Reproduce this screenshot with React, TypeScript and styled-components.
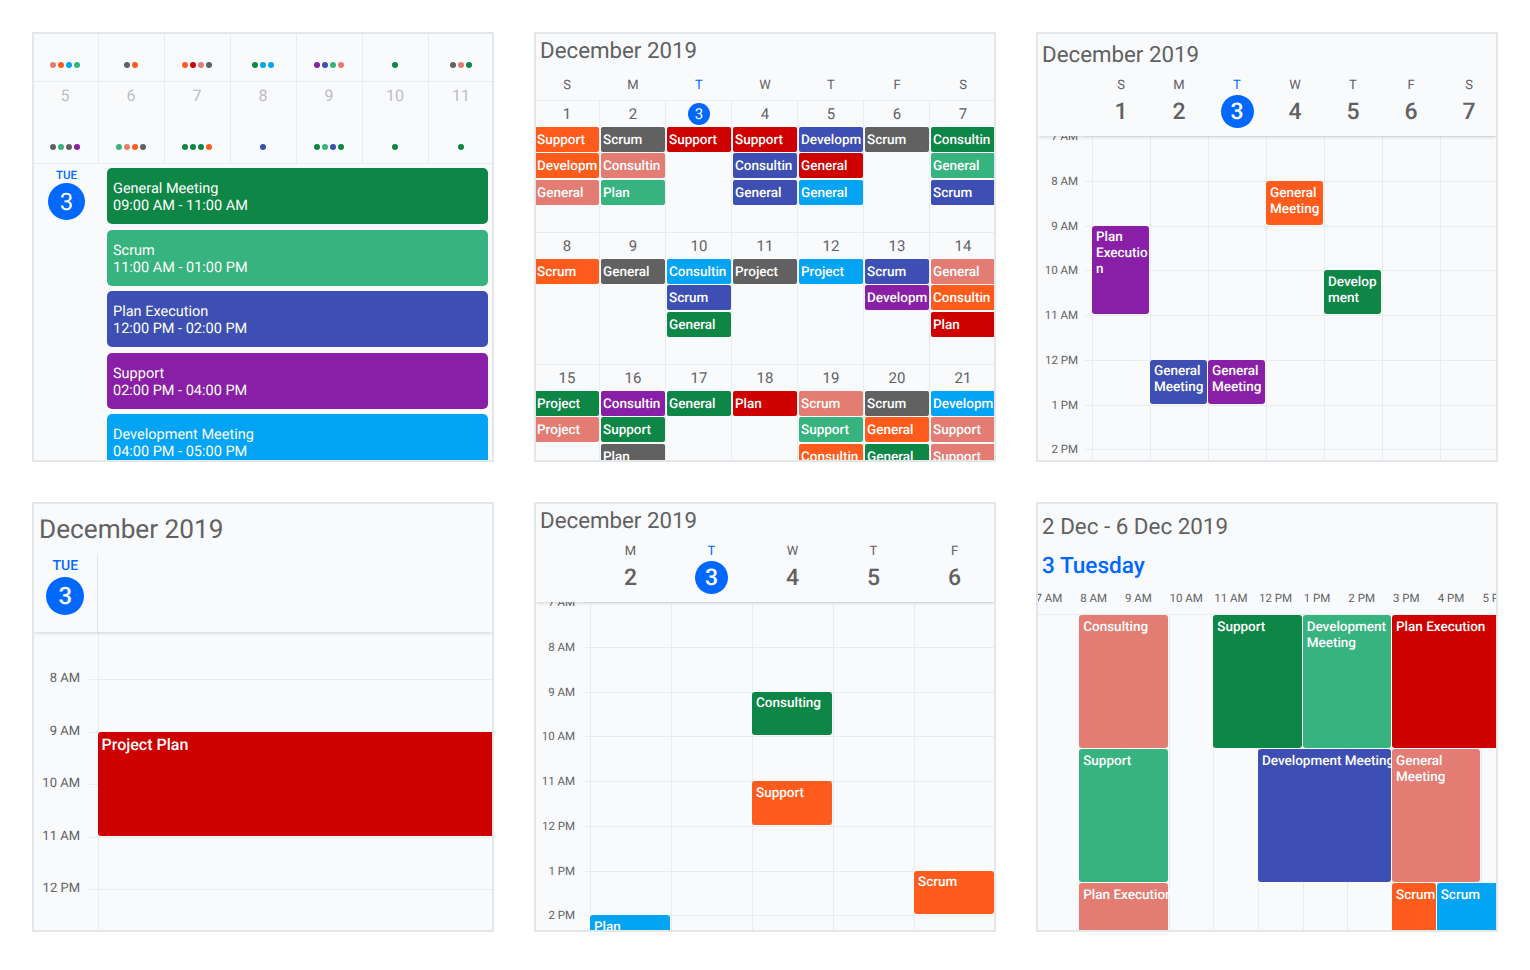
import styled, {createGlobalStyle} from 'styled-components';

const colors = {
    green: '#0e8645',
    mint: '#36b37e',
    indigo: '#3d4fb3',
    purple: '#881fa6',
    sky: '#02a4f3',
    red: '#ce0000',
    salmon: '#e37c72',
    orange: '#fe5b1c',
    grey: '#616161',
};

type Color = keyof typeof colors;
type Item = [string, Color];

const TODAY = '#0067ff';
const TEXT = '#616161';
const LINE = '#ebecf0';

const dotRows: {day?: number, dots: Color[]}[][] = [
    [
        {dots: ['salmon', 'orange', 'sky', 'mint']},
        {dots: ['grey', 'orange']},
        {dots: ['orange', 'red', 'salmon', 'grey']},
        {dots: ['green', 'sky', 'sky']},
        {dots: ['purple', 'indigo', 'mint', 'salmon']},
        {dots: ['green']},
        {dots: ['grey', 'salmon', 'green']},
    ],
    [
        {day: 5, dots: ['grey', 'mint', 'grey', 'purple']},
        {day: 6, dots: ['mint', 'salmon', 'orange', 'grey']},
        {day: 7, dots: ['green', 'green', 'green', 'orange']},
        {day: 8, dots: ['indigo']},
        {day: 9, dots: ['green', 'mint', 'indigo', 'green']},
        {day: 10, dots: ['green']},
        {day: 11, dots: ['green']},
    ],
];

const agenda: [string, string, Color][] = [
    ['General Meeting', '09:00 AM - 11:00 AM', 'green'],
    ['Scrum', '11:00 AM - 01:00 PM', 'mint'],
    ['Plan Execution', '12:00 PM - 02:00 PM', 'indigo'],
    ['Support', '02:00 PM - 04:00 PM', 'purple'],
    ['Development Meeting', '04:00 PM - 05:00 PM', 'sky'],
];

const monthDays: Item[][] = [
    [['Support', 'orange'], ['Development', 'orange'], ['General', 'salmon']],
    [['Scrum', 'grey'], ['Consulting', 'salmon'], ['Plan', 'mint']],
    [['Support', 'red']],
    [['Support', 'red'], ['Consulting', 'indigo'], ['General', 'indigo']],
    [['Development', 'indigo'], ['General', 'red'], ['General', 'sky']],
    [['Scrum', 'grey']],
    [['Consulting', 'green'], ['General', 'mint'], ['Scrum', 'indigo']],
    [['Scrum', 'orange']],
    [['General', 'grey']],
    [['Consulting', 'sky'], ['Scrum', 'indigo'], ['General', 'green']],
    [['Project', 'grey']],
    [['Project', 'sky']],
    [['Scrum', 'indigo'], ['Development', 'purple']],
    [['General', 'salmon'], ['Consulting', 'orange'], ['Plan', 'red']],
    [['Project', 'green'], ['Project', 'salmon']],
    [['Consulting', 'purple'], ['Support', 'green'], ['Plan', 'grey']],
    [['General', 'green']],
    [['Plan', 'red']],
    [['Scrum', 'salmon'], ['Support', 'mint'], ['Consulting', 'orange']],
    [['Scrum', 'grey'], ['General', 'orange'], ['General', 'green']],
    [['Development', 'sky'], ['Support', 'salmon'], ['Support', 'salmon']],
];

const letters = ['S', 'M', 'T', 'W', 'T', 'F', 'S'];
const hourNames = ['7 AM', '8 AM', '9 AM', '10 AM', '11 AM', '12 PM', '1 PM', '2 PM', '3 PM', '4 PM', '5 PM', '6 PM'];

type GridEvent = {title: string, color: Color, col: number, row: number, span: number};

const weekEvents: GridEvent[] = [
    {title: 'General Meeting', color: 'orange', col: 4, row: 2, span: 1},
    {title: 'Plan Execution', color: 'purple', col: 1, row: 3, span: 2},
    {title: 'Development', color: 'green', col: 5, row: 4, span: 1},
    {title: 'General Meeting', color: 'indigo', col: 2, row: 6, span: 1},
    {title: 'General Meeting', color: 'purple', col: 3, row: 6, span: 1},
];

const workWeekEvents: GridEvent[] = [
    {title: 'Consulting', color: 'green', col: 3, row: 3, span: 1},
    {title: 'Support', color: 'orange', col: 3, row: 5, span: 1},
    {title: 'Scrum', color: 'orange', col: 5, row: 7, span: 1},
    {title: 'Plan', color: 'sky', col: 1, row: 8, span: 1},
];

const timelineEvents: {title: string, color: Color, col: number, row: number, width: number, nowrap?: boolean}[] = [
    {title: 'Consulting', color: 'salmon', col: 2, row: 1, width: 2},
    {title: 'Support', color: 'green', col: 5, row: 1, width: 2},
    {title: 'Development Meeting', color: 'mint', col: 7, row: 1, width: 2},
    {title: 'Plan Execution', color: 'red', col: 9, row: 1, width: 3},
    {title: 'Support', color: 'mint', col: 2, row: 2, width: 2},
    {title: 'Development Meeting', color: 'indigo', col: 6, row: 2, width: 3, nowrap: true},
    {title: 'General Meeting', color: 'salmon', col: 9, row: 2, width: 2},
    {title: 'Plan Execution', color: 'salmon', col: 2, row: 3, width: 2, nowrap: true},
    {title: 'Scrum', color: 'orange', col: 9, row: 3, width: 1},
    {title: 'Scrum', color: 'sky', col: 10, row: 3, width: 2},
];

type TimeGridProps = {
    columns: string,
    count: number,
    hours: number,
    rowHeight: number,
    shift?: number,
    labelSize: number,
    labelPad: number,
    tick: number,
    events: GridEvent[],
    eventSize?: number,
};

function TimeGrid({columns, count, hours, rowHeight, shift = 0.4, labelSize, labelPad, tick, events, eventSize = 13.5}: TimeGridProps) {
    const rows = hourNames.slice(0, hours);
    return (
        <Scroller>
            <HourGrid $columns={columns} $rowHeight={rowHeight} $shift={shift}>
                {rows.map((name, row) => (
                    <GutterCell key={name} $row={row + 1} $tick={tick}>
                        <HourLabel $size={labelSize} $pad={labelPad}>{name}</HourLabel>
                    </GutterCell>
                ))}
                {rows.map((name, row) =>
                    Array.from({length: count}, (_, col) => (
                        <SlotCell key={`${name}-${col}`} $row={row + 1} $col={col + 2}/>
                    ))
                )}
                {events.map(event => (
                    <SlotEvent
                        key={`${event.title}-${event.col}-${event.row}`}
                        $color={event.color}
                        $col={event.col + 1}
                        $row={event.row}
                        $span={event.span}
                        $size={eventSize}
                    >
                        {event.title}
                    </SlotEvent>
                ))}
            </HourGrid>
        </Scroller>
    );
}

function DayHeader({columns, days}: {columns: string, days: [string, number][]}) {
    return (
        <DayRow $columns={columns}>
            <span/>
            {days.map(([letter, day]) => (
                <DayColumn key={day}>
                    <DayLetter $today={day === 3}>{letter}</DayLetter>
                    <DayNumber $today={day === 3}>{day}</DayNumber>
                </DayColumn>
            ))}
        </DayRow>
    );
}

function AgendaPanel() {
    return (
        <Card>
            <DotMonth>
                {dotRows.map((row, index) => (
                    <DotRow key={index} $first={index === 0}>
                        {row.map((cell, cellIndex) => (
                            <DotCell key={cellIndex}>
                                {cell.day && <DotDay>{cell.day}</DotDay>}
                                <Dots>
                                    {cell.dots.map((dot, dotIndex) => <Dot key={dotIndex} $color={dot}/>)}
                                </Dots>
                            </DotCell>
                        ))}
                    </DotRow>
                ))}
            </DotMonth>
            <Agenda>
                <AgendaDay>
                    <AgendaWeekday>TUE</AgendaWeekday>
                    <AgendaDate>3</AgendaDate>
                </AgendaDay>
                <AgendaList>
                    {agenda.map(([title, time, color]) => (
                        <AgendaItem key={title} $color={color}>
                            {title}<br/>{time}
                        </AgendaItem>
                    ))}
                </AgendaList>
            </Agenda>
        </Card>
    );
}

function MonthPanel() {
    return (
        <Card>
            <Title>December 2019</Title>
            <MonthLetters>
                {letters.map((letter, index) => (
                    <MonthLetter key={index} $today={index === 2}>{letter}</MonthLetter>
                ))}
            </MonthLetters>
            <MonthGrid>
                {monthDays.map((items, index) => (
                    <MonthCell key={index}>
                        <MonthDate $today={index === 2}>{index + 1}</MonthDate>
                        {items.map(([title, color], itemIndex) => (
                            <MonthEvent key={itemIndex} $color={color}>{title}</MonthEvent>
                        ))}
                    </MonthCell>
                ))}
            </MonthGrid>
        </Card>
    );
}

function WeekPanel() {
    const columns = '54px repeat(7, 58px)';
    return (
        <Card>
            <StickyHead>
                <WeekTitle>December 2019</WeekTitle>
                <DayHeader columns={columns} days={letters.map((letter, index) => [letter, index + 1])}/>
            </StickyHead>
            <TimeGrid columns={columns} count={7} hours={9} rowHeight={44.7} labelSize={11.5} labelPad={14}
                      tick={7} events={weekEvents}/>
        </Card>
    );
}

function DayPanel() {
    const columns = '63.5px 400px';
    return (
        <Card>
            <StickyHead>
                <DayTitle>December 2019</DayTitle>
                <SingleDay>
                    <SingleDayLabel>TUE</SingleDayLabel>
                    <SingleDayDate>3</SingleDayDate>
                </SingleDay>
            </StickyHead>
            <TimeGrid columns={columns} count={1} hours={7} rowHeight={52.5} shift={-5.5} labelSize={13} labelPad={17.5}
                      tick={9} eventSize={16} events={[
                {title: 'Project Plan', color: 'red', col: 1, row: 3, span: 2},
            ]}/>
        </Card>
    );
}

function WorkWeekPanel() {
    const columns = '54px repeat(5, 81px)';
    return (
        <Card>
            <StickyHead>
                <Title>December 2019</Title>
                <DayHeader columns={columns} days={[['M', 2], ['T', 3], ['W', 4], ['T', 5], ['F', 6]]}/>
            </StickyHead>
            <TimeGrid columns={columns} count={5} hours={9} rowHeight={44.7} labelSize={11.5} labelPad={15}
                      tick={7} events={workWeekEvents}/>
        </Card>
    );
}

function TimelinePanel() {
    return (
        <Card>
            <TimelineHead>
                <RangeTitle>2 Dec - 6 Dec 2019</RangeTitle>
                <TodayTitle>3 Tuesday</TodayTitle>
                <TimelineHours>
                    {hourNames.map(name => <TimelineHour key={name}>{name}</TimelineHour>)}
                </TimelineHours>
            </TimelineHead>
            <TimelineBody>
                {Array.from({length: 36}, (_, index) => (
                    <TimelineSlot key={index} $col={index % 12 + 1} $row={Math.floor(index / 12) + 1}/>
                ))}
                {timelineEvents.map(event => (
                    <TimelineEvent
                        key={`${event.title}-${event.col}-${event.row}`}
                        $color={event.color}
                        $col={event.col}
                        $row={event.row}
                        $width={event.width}
                    >
                        <TimelineText $nowrap={event.nowrap}>{event.title}</TimelineText>
                    </TimelineEvent>
                ))}
            </TimelineBody>
        </Card>
    );
}

export default function App() {
    return (
        <>
            <GlobalStyle/>
            <Page>
                <AgendaPanel/>
                <MonthPanel/>
                <WeekPanel/>
                <DayPanel/>
                <WorkWeekPanel/>
                <TimelinePanel/>
            </Page>
        </>
    );
}

const GlobalStyle = createGlobalStyle`
  body {
    margin: 0;
    background: #fff;
    font-family: Roboto, "Noto Sans", sans-serif;
    color: ${TEXT};
    text-rendering: geometricPrecision;
  }
`;

const Page = styled.div`
  display: grid;
  grid-template-columns: repeat(3, 462px);
  grid-auto-rows: 430px;
  gap: 40px;
  padding: 32px;
`;

const Card = styled.section`
  box-sizing: border-box;
  display: flex;
  flex-direction: column;
  overflow: hidden;
  border: 2px solid #e5e6e7;
  background: #f9fafc;
`;

const Title = styled.h2`
  margin: 4px 0 0;
  padding-left: 4px;
  font-size: 22.3px;
  font-weight: 400;
  line-height: 26px;
`;

const WeekTitle = styled(Title)`
  margin-top: 8px;
`;

const DayTitle = styled(Title)`
  margin-top: 11px;
  padding-left: 5px;
  font-size: 26.2px;
  line-height: 30px;
`;

const StickyHead = styled.header`
  position: relative;
  z-index: 1;
  flex: none;
  background: #f9fafc;
  box-shadow: 0 1px 4px rgba(0, 0, 0, 0.16);
`;

const DayRow = styled.div<{$columns: string}>`
  display: grid;
  grid-template-columns: ${p => p.$columns};
  margin-top: 11px;
  padding-bottom: 8px;
`;

const DayColumn = styled.div`
  display: flex;
  flex-direction: column;
  align-items: center;
  gap: 2px;
`;

const DayLetter = styled.span<{$today?: boolean}>`
  font-size: 13px;
  line-height: 14px;
  color: ${p => p.$today ? TODAY : TEXT};
`;

const DayNumber = styled.span<{$today?: boolean}>`
  display: flex;
  align-items: center;
  justify-content: center;
  width: 33px;
  height: 33px;
  border-radius: 50%;
  font-size: 23px;
  font-weight: 500;
  background: ${p => p.$today ? TODAY : 'transparent'};
  color: ${p => p.$today ? '#fff' : TEXT};
`;

const Scroller = styled.div`
  flex: 1;
  min-height: 0;
  overflow: hidden;
`;

const HourGrid = styled.div<{$columns: string, $rowHeight: number, $shift: number}>`
  display: grid;
  grid-template-columns: ${p => p.$columns};
  grid-auto-rows: ${p => p.$rowHeight}px;
  margin-top: ${p => p.$shift}px;
`;

const GutterCell = styled.div<{$row: number, $tick: number}>`
  position: relative;
  grid-column: 1;
  grid-row: ${p => p.$row};

  &::after {
    content: '';
    position: absolute;
    top: 0;
    right: 0;
    width: ${p => p.$tick}px;
    height: 1px;
    background: ${LINE};
  }
`;

const HourLabel = styled.div<{$size: number, $pad: number}>`
  padding-right: ${p => p.$pad}px;
  font-size: ${p => p.$size}px;
  line-height: ${p => p.$size > 12 ? 14 : 17}px;
  text-align: right;
  transform: translateY(-50%);
`;

const SlotCell = styled.div<{$row: number, $col: number}>`
  grid-column: ${p => p.$col};
  grid-row: ${p => p.$row};
  border-top: 1px solid ${LINE};
  border-left: 1px solid ${LINE};
`;

const SlotEvent = styled.div<{$color: Color, $col: number, $row: number, $span: number, $size: number}>`
  z-index: 1;
  grid-column: ${p => p.$col};
  grid-row: ${p => p.$row} / span ${p => p.$span};
  min-width: 0;
  margin: 0 1px 1px 0;
  padding: ${p => p.$size > 14 ? 4 : 3.5}px 0 0 4px;
  overflow: hidden;
  border-radius: 3px;
  overflow-wrap: anywhere;
  font-size: ${p => p.$size}px;
  font-weight: 500;
  line-height: ${p => p.$size > 14 ? 18 : 16}px;
  color: #fff;
  background: ${p => colors[p.$color]};
`;

const DotMonth = styled.div`
  flex: none;
  margin-left: -1.5px;
`;

const DotRow = styled.div<{$first: boolean}>`
  display: grid;
  grid-template-columns: repeat(7, 66px);
  height: ${p => p.$first ? 48 : 82}px;
  border-bottom: 1px solid ${LINE};
  box-sizing: border-box;
`;

const DotCell = styled.div`
  display: flex;
  flex-direction: column;
  align-items: center;
  justify-content: flex-end;
  padding-bottom: 13.5px;
  border-right: 1px solid ${LINE};
  box-sizing: border-box;
`;

const DotDay = styled.span`
  margin-bottom: auto;
  padding-top: 4.5px;
  font-size: 16px;
  line-height: 18px;
  color: #bdbdbd;
`;

const Dots = styled.div`
  display: flex;
  gap: 2px;
`;

const Dot = styled.i<{$color: Color}>`
  width: 6px;
  height: 6px;
  border-radius: 50%;
  background: ${p => colors[p.$color]};
`;

const Agenda = styled.div`
  display: grid;
  grid-template-columns: 65px 1fr;
  gap: 8px;
  padding: 4px 4px 0 0;
`;

const AgendaDay = styled.div`
  display: flex;
  flex-direction: column;
  align-items: center;
`;

const AgendaWeekday = styled.span`
  font-size: 11.5px;
  font-weight: 500;
  line-height: 15px;
  color: ${TODAY};
`;

const AgendaDate = styled.span`
  display: flex;
  align-items: center;
  justify-content: center;
  width: 37px;
  height: 37px;
  border-radius: 50%;
  font-size: 24px;
  color: #fff;
  background: ${TODAY};
`;

const AgendaList = styled.div`
  display: flex;
  flex-direction: column;
  gap: 5.6px;
`;

const AgendaItem = styled.div<{$color: Color}>`
  box-sizing: border-box;
  height: 56px;
  padding: 12px 6px 0;
  border-radius: 5px;
  font-size: 14.5px;
  line-height: 17px;
  color: #fff;
  background: ${p => colors[p.$color]};
`;

const MonthLetters = styled.div`
  display: grid;
  grid-template-columns: repeat(7, 66px);
  margin: 15px 0 0 -2px;
  padding-bottom: 6.5px;
`;

const MonthLetter = styled.span<{$today: boolean}>`
  font-size: 13px;
  line-height: 14px;
  text-align: center;
  color: ${p => p.$today ? TODAY : TEXT};
`;

const MonthGrid = styled.div`
  display: grid;
  grid-template-columns: repeat(7, 66px);
  grid-auto-rows: 132.1px;
  margin-left: -2px;
  border-top: 1px solid ${LINE};
`;

const MonthCell = styled.div`
  display: flex;
  flex-direction: column;
  gap: 1.5px;
  padding-left: 1px;
  border-right: 1px solid ${LINE};
  border-bottom: 1px solid ${LINE};
  box-sizing: border-box;
  min-width: 0;
`;

const MonthDate = styled.span<{$today: boolean}>`
  display: flex;
  align-items: center;
  justify-content: center;
  align-self: center;
  width: 22px;
  height: 22px;
  margin-top: 2.5px;
  border-radius: 50%;
  font-size: 15px;
  color: ${p => p.$today ? '#fff' : TEXT};
  background: ${p => p.$today ? TODAY : 'transparent'};
`;

const MonthEvent = styled.div<{$color: Color}>`
  flex: none;
  box-sizing: border-box;
  height: 25px;
  padding: 1px 0 0 2px;
  overflow: hidden;
  overflow-wrap: anywhere;
  border-radius: 2px;
  font-size: 13.5px;
  font-weight: 500;
  line-height: 24px;
  color: #fff;
  background: ${p => colors[p.$color]};
`;

const SingleDay = styled.div`
  display: flex;
  flex-direction: column;
  align-items: center;
  width: 63.5px;
  height: 77px;
  margin-top: 10px;
  padding-top: 3px;
  box-sizing: border-box;
  border-right: 1px solid #e2e3e6;
`;

const SingleDayLabel = styled.span`
  font-size: 14px;
  font-weight: 500;
  line-height: 16px;
  color: ${TODAY};
`;

const SingleDayDate = styled.span`
  display: flex;
  align-items: center;
  justify-content: center;
  width: 38px;
  height: 38px;
  margin-top: 3px;
  border-radius: 50%;
  font-size: 24px;
  font-weight: 500;
  color: #fff;
  background: ${TODAY};
`;

const TimelineHead = styled.header`
  flex: none;
  height: 111px;
  box-sizing: border-box;
  border-bottom: 1px solid ${LINE};
`;

const RangeTitle = styled(Title)`
  margin-top: 9px;
  font-size: 22.4px;
  line-height: 28px;
`;

const TodayTitle = styled.h3`
  margin: 11px 0 0;
  padding-left: 4px;
  font-size: 22.6px;
  font-weight: 500;
  line-height: 28px;
  color: ${TODAY};
`;

const TimelineHours = styled.div`
  display: grid;
  grid-template-columns: repeat(12, 44.7px);
  margin: 11px 0 0 -3.5px;
`;

const TimelineHour = styled.span`
  padding-left: 1px;
  font-size: 11.5px;
  line-height: 14px;
  white-space: nowrap;
`;

const TimelineBody = styled.div`
  display: grid;
  grid-template-columns: repeat(12, 44.7px);
  grid-auto-rows: 134px;
  margin-left: -3.5px;
`;

const TimelineSlot = styled.div<{$col: number, $row: number}>`
  grid-column: ${p => p.$col};
  grid-row: ${p => p.$row};
  border-left: 1px solid ${LINE};
`;

const TimelineEvent = styled.div<{$color: Color, $col: number, $row: number, $width: number}>`
  z-index: 1;
  grid-column: ${p => p.$col} / span ${p => p.$width};
  grid-row: ${p => p.$row};
  min-width: 0;
  margin: 0 1px 1px 0;
  padding: 3.5px 0 0 4px;
  border-radius: 3px;
  font-size: 13.5px;
  font-weight: 500;
  line-height: 16px;
  color: #fff;
  background: ${p => colors[p.$color]};
`;

const TimelineText = styled.div<{$nowrap?: boolean}>`
  margin-right: -3px;
  overflow: hidden;
  white-space: ${p => p.$nowrap ? 'nowrap' : 'normal'};
`;
